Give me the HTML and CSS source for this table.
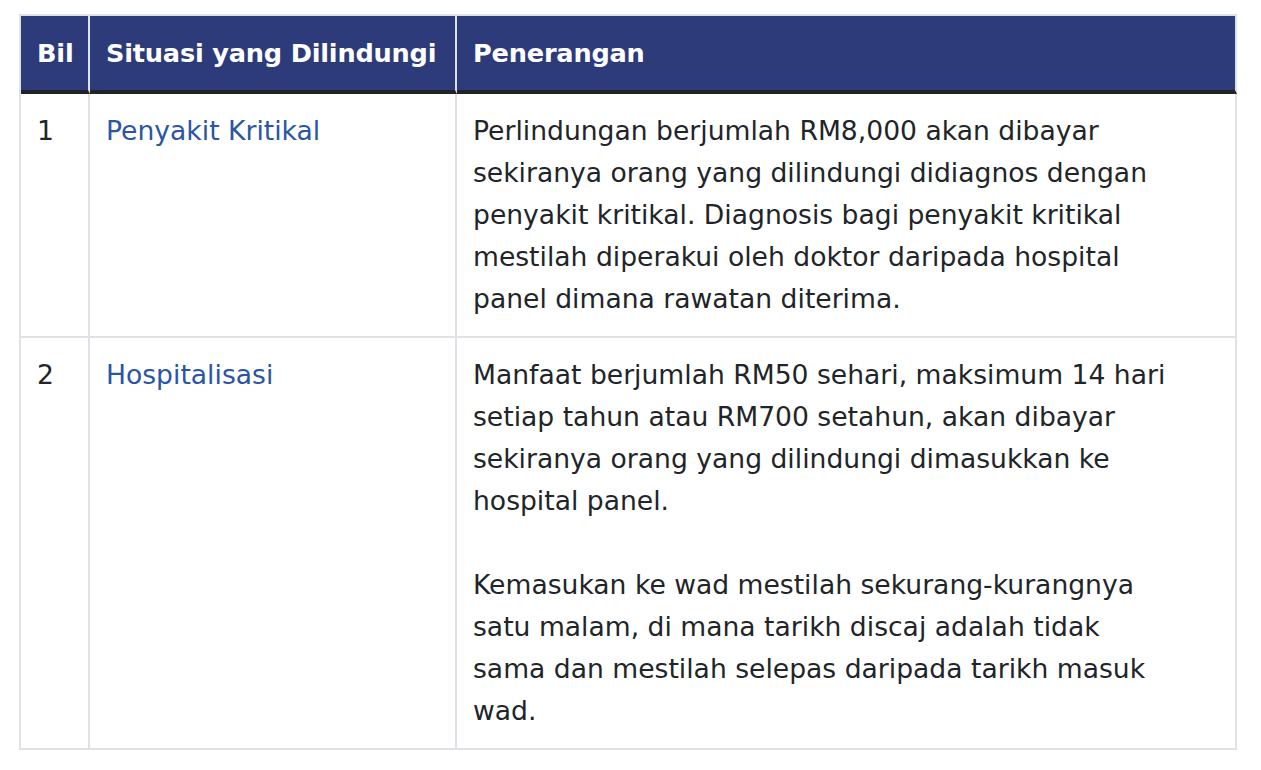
FILE: index.html
```html
<!DOCTYPE html>
<html lang="ms">
<head>
<meta charset="utf-8">
<title>Perlindungan</title>
<link rel="stylesheet" href="styles.css">
</head>
<body>
<table class="cover-table">
  <thead>
    <tr>
      <th class="col-no">Bil</th>
      <th class="col-sit">Situasi yang Dilindungi</th>
      <th class="col-desc">Penerangan</th>
    </tr>
  </thead>
  <tbody>
    <tr>
      <td>1</td>
      <td><a class="sit-link" href="#">Penyakit Kritikal</a></td>
      <td>
        <p>Perlindungan berjumlah RM8,000 akan dibayar sekiranya orang yang dilindungi didiagnos dengan penyakit kritikal. Diagnosis bagi penyakit kritikal mestilah diperakui oleh doktor daripada hospital panel dimana rawatan diterima.</p>
      </td>
    </tr>
    <tr>
      <td>2</td>
      <td><a class="sit-link" href="#">Hospitalisasi</a></td>
      <td>
        <p>Manfaat berjumlah RM50 sehari, maksimum 14 hari setiap tahun atau RM700 setahun, akan dibayar sekiranya orang yang dilindungi dimasukkan ke hospital panel.</p>
        <p>Kemasukan ke wad mestilah sekurang-kurangnya satu malam, di mana tarikh discaj adalah tidak sama dan mestilah selepas daripada tarikh masuk wad.</p>
      </td>
    </tr>
  </tbody>
</table>
</body>
</html>
```
FILE: styles.css
```css
* { box-sizing: border-box; }
body {
  margin: 0;
  padding: 14px 0 0 19px;
  background: #fff;
  font-family: "DejaVu Sans", sans-serif;
  color: #212529;
}
.cover-table {
  width: 1218px;
  table-layout: fixed;
  border-collapse: separate;
  border-spacing: 0;
  border-top: 2px solid #dee2e6;
  border-left: 2px solid #dee2e6;
}
.cover-table th,
.cover-table td {
  padding: 16px;
  border-right: 2px solid #dee2e6;
  border-bottom: 2px solid #dee2e6;
  vertical-align: top;
  text-align: left;
  font-size: 26.6px;
  line-height: 42px;
}
.cover-table th {
  background: #2d3b7b;
  color: #fff;
  font-weight: 700;
  font-size: 25.6px;
  white-space: nowrap;
  border-bottom: 4px solid #212529;
  letter-spacing: -0.2px;
}
.col-no { width: 69px; }
.col-sit { width: 367px; }
.col-desc { width: 780px; }
.cover-table p { margin: 0 0 42px; max-width: 700px; }
.cover-table p:last-child { margin-bottom: 0; }
.sit-link {
  color: #2b55a5;
  text-decoration: none;
}
```
